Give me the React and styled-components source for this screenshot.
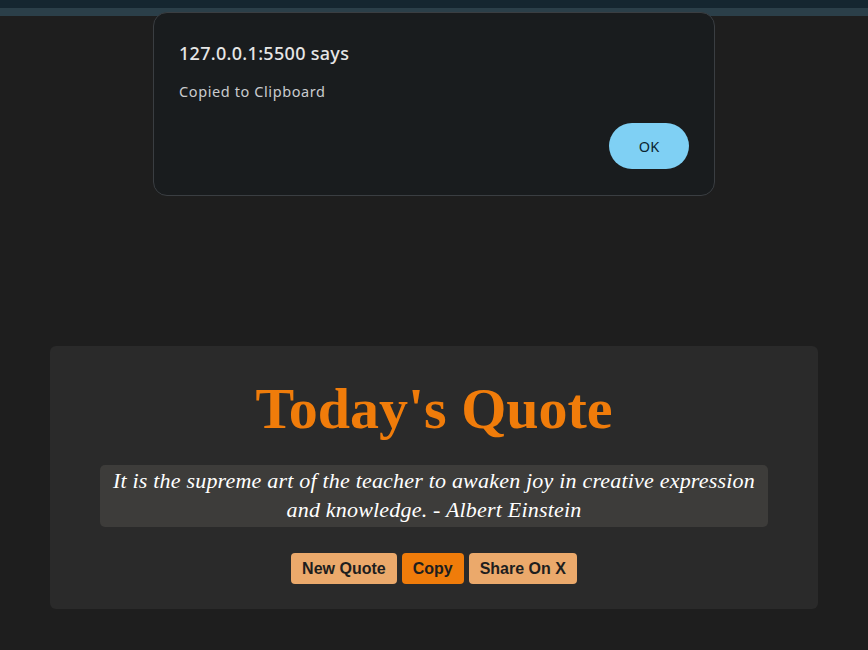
import React from "react";
import styled, { createGlobalStyle } from "styled-components";

const GlobalStyle = createGlobalStyle`
  html, body {
    margin: 0;
    padding: 0;
    background-color: #1e1e1e;
  }
  body {
    width: 868px;
    height: 650px;
    overflow: hidden;
    font-family: "Liberation Sans", Arial, sans-serif;
  }
`;

const Page = styled.div`
  position: relative;
  width: 868px;
  height: 650px;
  background-color: #1e1e1e;
`;

const TopStrip = styled.div`
  height: 8px;
  background-color: #152630;
  border-bottom: 8px solid #2b3f49;
`;

const Main = styled.main`
  display: flex;
  justify-content: center;
  padding-top: 330px;
`;

const Card = styled.section`
  width: 768px;
  height: 263px;
  box-sizing: border-box;
  background-color: #2a2a2a;
  border-radius: 6px;
  display: flex;
  flex-direction: column;
  align-items: center;
  padding-top: 27px;
`;

const Title = styled.h1`
  margin: 0;
  font-family: "Liberation Serif", "Times New Roman", serif;
  font-weight: bold;
  font-size: 58px;
  line-height: 72px;
  color: #f07c0a;
`;

const QuoteBox = styled.div`
  margin-top: 20px;
  width: 668px;
  box-sizing: border-box;
  padding: 1px 8px 3px;
  background-color: #3d3c3a;
  border-radius: 5px;
  font-family: "Liberation Serif", "Times New Roman", serif;
  font-style: italic;
  font-size: 22px;
  letter-spacing: 0.2px;
  line-height: 29px;
  color: #ffffff;
  text-align: center;
`;

const Actions = styled.div`
  display: flex;
  gap: 5px;
  margin-top: 26px;
`;

const ActionButton = styled.button`
  height: 31px;
  padding: 0 11px;
  border: none;
  border-radius: 4px;
  background-color: ${(p) => (p.$active ? "#f07c0a" : "#eba96b")};
  color: #1e1e1e;
  font-family: "Liberation Sans", Arial, sans-serif;
  font-weight: bold;
  font-size: 16px;
  cursor: pointer;
`;

const Dialog = styled.div`
  position: absolute;
  top: 12px;
  left: 153px;
  width: 562px;
  height: 184px;
  box-sizing: border-box;
  background-color: #191c1e;
  border: 1px solid #3a3e42;
  border-radius: 14px;
  padding: 29px 25px 0 25px;
  display: flex;
  flex-direction: column;
  font-family: "Noto Sans", "Open Sans", sans-serif;
`;

const DialogTitle = styled.div`
  font-size: 18px;
  font-weight: 500;
  letter-spacing: 0.3px;
  line-height: 22px;
  color: #e6e6e6;
`;

const DialogMessage = styled.div`
  margin-top: 17px;
  font-size: 14.5px;
  line-height: 20px;
  color: #c9cbce;
  letter-spacing: 0.6px;
`;

const DialogFooter = styled.div`
  display: flex;
  justify-content: flex-end;
  margin-top: 22px;
`;

const OkButton = styled.button`
  width: 80px;
  height: 46px;
  border: none;
  border-radius: 23px;
  background-color: #7fd0f4;
  color: #0b2430;
  font-family: "Noto Sans", "Open Sans", sans-serif;
  font-size: 14.5px;
  cursor: pointer;
`;

export default function App() {
  return (
    <Page>
      <GlobalStyle />
      <TopStrip />
      <Main>
        <Card>
          <Title>Today's Quote</Title>
          <QuoteBox>
            It is the supreme art of the teacher to awaken joy in creative
            expression and knowledge. - Albert Einstein
          </QuoteBox>
          <Actions>
            <ActionButton>New Quote</ActionButton>
            <ActionButton $active>Copy</ActionButton>
            <ActionButton>Share On X</ActionButton>
          </Actions>
        </Card>
      </Main>
      <Dialog role="alertdialog">
        <DialogTitle>127.0.0.1:5500 says</DialogTitle>
        <DialogMessage>Copied to Clipboard</DialogMessage>
        <DialogFooter>
          <OkButton>OK</OkButton>
        </DialogFooter>
      </Dialog>
    </Page>
  );
}
